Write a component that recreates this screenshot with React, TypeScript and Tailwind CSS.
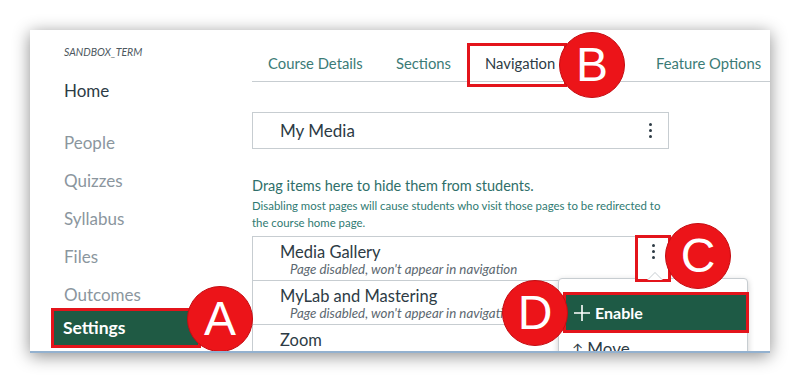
import { ReactNode } from "react";

const lato = { fontFamily: "Lato, 'Open Sans', sans-serif" };

function Kebab() {
  return (
    <div className="flex flex-col items-center gap-[3px]">
      <span className="w-[3px] h-[3px] rounded-full bg-[#2d3b45]" />
      <span className="w-[3px] h-[3px] rounded-full bg-[#2d3b45]" />
      <span className="w-[3px] h-[3px] rounded-full bg-[#2d3b45]" />
    </div>
  );
}

function Marker({ letter, className }: { letter: string; className: string }) {
  return (
    <div
      className={`absolute w-[66px] h-[66px] rounded-full bg-[#ec1419] border border-[#c40d12] flex items-center justify-center text-white text-[48px] leading-none ${className}`}
      style={{ fontFamily: "'Liberation Sans', Arial, sans-serif" }}
    >
      {letter}
    </div>
  );
}

function NavLink({ children, dark }: { children: ReactNode; dark?: boolean }) {
  return (
    <div
      className={`h-[38px] leading-[38px] text-[17px] ${dark ? "text-[#2d3b45]" : "text-[#8b969e]"}`}
    >
      {children}
    </div>
  );
}

function HiddenRow({ title, last }: { title: string; last?: boolean }) {
  return (
    <div className={`pl-[27px] pt-[5px] pb-[4px] ${last ? "" : "border-b border-[#c7cdd1]"}`}>
      <div className="text-[16.5px] leading-[20px] text-[#2d3b45]">{title}</div>
      <div className="pl-[10px] text-[13.3px] leading-[14px] italic text-[#5c6870]">
        Page disabled, won't appear in navigation
      </div>
    </div>
  );
}

export default function App() {
  return (
    <div className="w-[800px] h-[383px] bg-white pt-[30px] pl-[30px]" style={lato}>
      <div className="relative w-[740px] h-[323px] bg-white overflow-hidden border-b-2 border-[#93b1cf] shadow-[0_3px_16px_rgba(0,0,0,0.45)] flex">
        {/* Course nav */}
        <div className="w-[222px] shrink-0 pt-[14px]">
          <div className="pl-[34px] h-[16px] leading-[16px] text-[10.5px] italic text-[#4d5860]">
            SANDBOX_TERM
          </div>
          <div className="pl-[34px] mt-[12px]">
            <NavLink dark>Home</NavLink>
          </div>
          <div className="pl-[34px] mt-[14px]">
            <NavLink>People</NavLink>
            <NavLink>Quizzes</NavLink>
            <NavLink>Syllabus</NavLink>
            <NavLink>Files</NavLink>
            <NavLink>Outcomes</NavLink>
          </div>
          <div className="ml-[21px] -mt-[6px] w-[150px] h-[40px] border-[3px] border-[#e3141b] bg-[#1f5a44] pl-[9px] leading-[34px] text-[17.5px] font-bold text-white">
            Settings
          </div>
        </div>

        {/* Main */}
        <div className="w-[518px]">
          <div className="h-[52px] pt-[14px] pl-[16px] flex border-b border-[#c7cdd1] text-[14.8px] leading-[38px] text-[#3b7b76]">
            <div className="w-[128px]">Course Details</div>
            <div className="w-[89px]">Sections</div>
            <div className="w-[171px] text-[#2d3b45]">Navigation</div>
            <div>Feature Options</div>
          </div>

          <div className="mt-[30px] w-[417px] h-[37px] border border-[#c7cdd1] flex items-center justify-between pl-[27px] pr-[16px]">
            <span className="text-[17px] text-[#2d3b45]">My Media</span>
            <Kebab />
          </div>

          <div className="mt-[28px] text-[14.5px] leading-[18px] text-[#2f6f6a]">
            Drag items here to hide them from students.
          </div>
          <div className="mt-[2px] w-[415px] text-[11.4px] leading-[17px] text-[#2f7a72]">
            Disabling most pages will cause students who visit those pages to be redirected to the course home page.
          </div>

          <div className="mt-[5px] w-[417px] border border-[#c7cdd1] relative">
            <HiddenRow title="Media Gallery" />
            <HiddenRow title="MyLab and Mastering" />
            <HiddenRow title="Zoom" last />
            <div className="absolute right-[16px] top-[8px]">
              <Kebab />
            </div>
          </div>
        </div>

        {/* Annotations */}
        <div className="absolute left-[437px] top-[13px] w-[100px] h-[44px] border-[3px] border-[#e3141b]" />
        <Marker letter="B" className="left-[529px] top-[2px]" />

        <div className="absolute left-[528px] top-[248px] w-[190px] h-[90px] bg-white border border-[#c7cdd1] rounded-[4px] shadow-[0_2px_6px_rgba(0,0,0,0.2)]">
          <div className="mt-[57px] pl-[13px] text-[17px] text-[#2d3b45] flex items-center gap-[4px]">
            <span className="text-[15px]">↑</span>
            <span>Move</span>
          </div>
        </div>

        <div className="absolute left-[605px] top-[205px] w-[36px] h-[47px] border-[3px] border-[#e3141b] bg-white flex flex-col items-center pt-[6px]">
          <Kebab />
          <div className="absolute left-[9px] bottom-[-1px] w-0 h-0 border-l-[8px] border-r-[8px] border-b-[8px] border-l-transparent border-r-transparent border-b-[#c7cdd1]" />
          <div className="absolute left-[10px] bottom-[-1px] w-0 h-0 border-l-[7px] border-r-[7px] border-b-[7px] border-l-transparent border-r-transparent border-b-white" />
        </div>
        <Marker letter="C" className="left-[635px] top-[193px]" />

        <div className="absolute left-[533px] top-[262px] w-[186px] h-[41px] border-[3px] border-[#e3141b] bg-[#1e5a45] flex items-center pl-[6px] gap-[3px] text-white">
          <svg width="20" height="20" viewBox="0 0 20 20" fill="none" stroke="white" strokeWidth="1.6">
            <path d="M10 2v16M2 10h16" />
          </svg>
          <span className="text-[16px] font-bold">Enable</span>
        </div>
        <Marker letter="D" className="left-[472px] top-[250px]" />

        <Marker letter="A" className="left-[157px] top-[256px]" />
      </div>
    </div>
  );
}
